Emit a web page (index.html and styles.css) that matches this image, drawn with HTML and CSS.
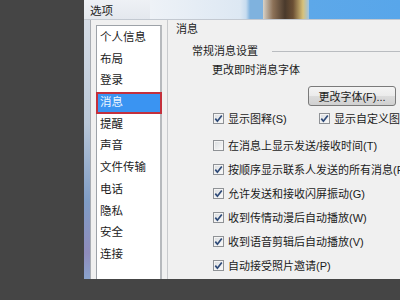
FILE: index.html
```html
<html>
 <head>
  <link rel="stylesheet" href="styles.css">
 </head>
<body>
 <div class="window">

  <div class="titlebar">
   <span class="title">选项</span>
   <div class="banner"><div class="figure"></div></div>
  </div>

  <div class="client">
   <div class="edge"></div>
   <div class="inner">

    <ul class="nav">
     <li>个人信息</li>
     <li>布局</li>
     <li>登录</li>
     <li class="active">消息</li>
     <li>提醒</li>
     <li>声音</li>
     <li>文件传输</li>
     <li>电话</li>
     <li>隐私</li>
     <li>安全</li>
     <li>连接</li>
    </ul>

    <div class="main">
     <div class="page-title">消息</div>

     <div class="group-head"><span>常规消息设置</span><div class="rule"></div></div>
     <div class="label">更改即时消息字体</div>
     <div class="btn-row"><button class="btn">更改字体(F)...</button></div>

     <div class="pair">
      <div class="check on wide"><span class="box"><svg viewBox="0 0 11 11"><path d="M2.3 5.6 L4.4 8.2 L8.8 2.4"/></svg></span>显示图释(S)</div>
      <div class="check on"><span class="box"><svg viewBox="0 0 11 11"><path d="M2.3 5.6 L4.4 8.2 L8.8 2.4"/></svg></span>显示自定义图释(C)</div>
     </div>

     <div class="checks">
      <div class="check"><span class="box"></span>在消息上显示发送/接收时间(T)</div>
      <div class="check on"><span class="box"><svg viewBox="0 0 11 11"><path d="M2.3 5.6 L4.4 8.2 L8.8 2.4"/></svg></span>按顺序显示联系人发送的所有消息(R)</div>
      <div class="check on"><span class="box"><svg viewBox="0 0 11 11"><path d="M2.3 5.6 L4.4 8.2 L8.8 2.4"/></svg></span>允许发送和接收闪屏振动(G)</div>
      <div class="check on"><span class="box"><svg viewBox="0 0 11 11"><path d="M2.3 5.6 L4.4 8.2 L8.8 2.4"/></svg></span>收到传情动漫后自动播放(W)</div>
      <div class="check on"><span class="box"><svg viewBox="0 0 11 11"><path d="M2.3 5.6 L4.4 8.2 L8.8 2.4"/></svg></span>收到语音剪辑后自动播放(V)</div>
      <div class="check on"><span class="box"><svg viewBox="0 0 11 11"><path d="M2.3 5.6 L4.4 8.2 L8.8 2.4"/></svg></span>自动接受照片邀请(P)</div>
     </div>

     <div class="group-head next"><span>以下消息设置</span></div>
    </div>

   </div>
  </div>

 </div>
</body>
</html>
```

FILE: styles.css
```css
html, body {
        margin: 0;
        padding: 0;
        width: 400px;
        height: 300px;
        overflow: hidden;
        background-color: #454545;
        font-family: "Liberation Sans", "Noto Sans CJK SC", sans-serif;
        font-size: 11px;
        color: #1b1b1b;
       }

.window {
          margin-left: 84px;
          width: 316px;
          height: 279px;
          display: flex;
          flex-direction: column;
          background-color: #f0f0f0;
          overflow: hidden;
         }

.titlebar {
            height: 19px;
            display: flex;
            align-items: center;
            background: linear-gradient(to bottom, #eef1f5, #e4e8ee);
            border-bottom: 1px solid #c3c9d1;
           }

.title {
         padding-left: 6px;
         width: 60px;
         font-size: 11.5px;
         color: #222;
        }

.banner {
          flex: 1;
          height: 19px;
          position: relative;
          background: linear-gradient(to right, #eef2f7 0, #dde8f3 90px, #c7dcef 96px, #7fb2de 100px, #7fb2de 112px, #5da8e9 160px, #58a6ea 250px);
         }

.figure {
          position: absolute;
          left: 113px;
          top: 0;
          width: 46px;
          height: 19px;
          background: linear-gradient(to right, #d8d2c8 0, #8d7258 10px, #4a3a2c 22px, #6b4f34 30px, #d8c27a 40px, #9cc4e6 46px);
         }

.client {
          flex: 1;
          display: flex;
          min-height: 0;
         }

.edge {
        width: 6px;
        background: linear-gradient(to bottom, #d6dde6 0, #b9c7d8 40%, #7f9dc6 70%, #8f8cbc 90%, #8aa3cc 100%);
       }

.inner {
         flex: 1;
         display: flex;
         border-left: 1px solid #a9adb3;
         padding-left: 5px;
         min-width: 0;
        }

.nav {
       list-style-type: none;
       margin: 5px 5px 0 0;
       padding: 1px 0 0 0;
       width: 63px;
       flex: none;
       background-color: #ffffff;
       border: 1px solid #9da2a8;
       border-right: 2px solid #b6b9bd;
       border-bottom: 0;
       font-size: 11.5px;
      }

.nav li {
          height: 21.7px;
          line-height: 21.7px;
          padding-left: 3px;
          box-sizing: border-box;
          white-space: nowrap;
         }

.nav li.active {
                 background-color: #3a94f2;
                 color: #eef6ff;
                 border: 2px solid #c4303c;
                 line-height: 17.7px;
                 padding-left: 2px;
                 margin: 0 -2px 0 -1px;
                }

.main {
        flex: 1;
        min-width: 0;
        border-left: 1px solid #c8cacd;
        padding-left: 8px;
        overflow: hidden;
        white-space: nowrap;
       }

.page-title {
              margin-top: 1px;
              line-height: 16px;
             }

.group-head {
              margin-top: 6px;
              padding-left: 16px;
              line-height: 16px;
              display: flex;
              align-items: center;
             }

.group-head .rule {
                    flex: 1;
                    margin-left: 14px;
                    border-top: 1px solid #b9bcc0;
                   }

.group-head.next {
                   margin-top: 1px;
                   padding-left: 24px;
                   color: #555;
                  }

.label {
         margin-top: 3px;
         padding-left: 36px;
         line-height: 16px;
        }

.btn-row {
           margin-top: 8px;
           padding-left: 132px;
           height: 20px;
          }

.btn {
       width: 88px;
       height: 20px;
       margin: 0;
       padding: 0;
       font-family: "Liberation Sans", "Noto Sans CJK SC", sans-serif;
       font-size: 11px;
       color: #1b1b1b;
       border: 1px solid #7a7a7a;
       border-radius: 3px;
       background: linear-gradient(to bottom, #f4f4f4 0, #ebebeb 50%, #dcdcdc 51%, #d0d0d0 100%);
      }

.pair {
        display: flex;
        padding-left: 37px;
       }

.pair .check {
               flex: none;
              }

.pair .wide {
              width: 106px;
             }

.checks {
          margin-top: 3px;
          padding-left: 37px;
         }

.check {
         height: 24px;
         display: flex;
         align-items: center;
        }

.box {
       width: 9px;
       height: 9px;
       margin-right: 4px;
       border: 1px solid #8f9296;
       background: linear-gradient(135deg, #d9dcdf, #fbfbfb);
       box-shadow: inset 0 0 0 1px #f4f4f4;
       display: flex;
       flex: none;
      }

.box svg {
           width: 11px;
           height: 11px;
           margin: -1px;
          }

.box path {
            fill: none;
            stroke: #2e4a78;
            stroke-width: 1.7;
           }
```
